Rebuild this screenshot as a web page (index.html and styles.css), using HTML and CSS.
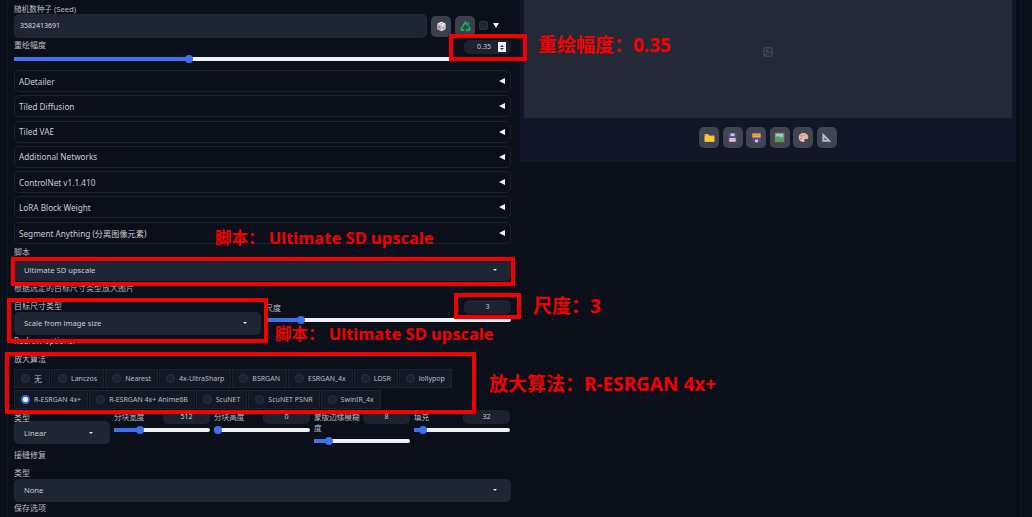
FILE: index.html
```html
<!DOCTYPE html>
<html lang="zh">
<head>
<meta charset="utf-8">
<title>Ultimate SD upscale</title>
<link rel="stylesheet" href="styles.css">
</head>
<body>
<div class="page">
  <main class="left">
    <div class="label seed-label">随机数种子 (Seed)</div>
    <div class="seed-row">
      <div class="field seed-input">3582413691</div>
      <button class="tool"><svg viewBox="0 0 16 16" width="11" height="11"><path d="M8 1l6 3v8l-6 3-6-3V4z" fill="#d8d2d8"/><path d="M8 1l6 3-6 3-6-3z" fill="#f3eef2"/><path d="M8 7v8l-6-3V4z" fill="#b9aeb9"/><circle cx="8" cy="4" r="1" fill="#a35a7a"/><circle cx="5" cy="9" r="1" fill="#a35a7a"/><circle cx="11" cy="10" r="1" fill="#a35a7a"/></svg></button>
      <button class="tool"><svg viewBox="0 0 16 16" width="11" height="11" fill="none" stroke="#17b45c" stroke-width="2.400"><path d="M4.500 6.500L8 1.800l2.300 3.400"/><path d="M12.300 7.500l2.200 4.300-1.200 1.400H10"/><path d="M6.500 13.200H2.700l-1-1.500L3.500 8.500"/><path d="M8.500 5.800h3.800V2M10 10.500v5M3 7l3 1" stroke-width="1.500"/></svg></button>
      <span class="check"></span>
      <span class="tri-down"></span>
    </div>
    <div class="strength">
      <div class="strength-head">
        <span class="label">重绘幅度</span>
        <div class="num wide">0.35<span class="spin"><i></i><i></i></span></div>
      </div>
      <div class="slider"><span class="fill" style="width:175px"></span></div>
    </div>
    <div class="accordions">
      <div class="acc"><span>ADetailer</span><b></b></div>
      <div class="acc"><span>Tiled Diffusion</span><b></b></div>
      <div class="acc"><span>Tiled VAE</span><b></b></div>
      <div class="acc"><span>Additional Networks</span><b></b></div>
      <div class="acc"><span>ControlNet v1.1.410</span><b></b></div>
      <div class="acc"><span>LoRA Block Weight</span><b></b></div>
      <div class="acc"><span>Segment Anything (分离图像元素)</span><b></b></div>
    </div>
    <div class="label script-label">脚本</div>
    <div class="select">Ultimate SD upscale<em></em></div>
    <div class="label note">根据选定的目标尺寸类型放大图片</div>
    <div class="target-row">
      <div class="target">
        <div class="label">目标尺寸类型</div>
        <div class="select">Scale from image size<em></em></div>
      </div>
      <div class="scale">
        <div class="scale-head"><span class="label">尺度</span><div class="num">3</div></div>
        <div class="slider"><span class="fill" style="width:36px"></span></div>
      </div>
    </div>
    <div class="label redraw">Redraw options:</div>
    <div class="label upscaler-label">放大算法</div>
    <div class="radios">
      <label class="radio"><i></i><span class="cjk">无</span></label>
      <label class="radio"><i></i>Lanczos</label>
      <label class="radio"><i></i>Nearest</label>
      <label class="radio"><i></i>4x-UltraSharp</label>
      <label class="radio"><i></i>BSRGAN</label>
      <label class="radio"><i></i>ESRGAN_4x</label>
      <label class="radio"><i></i>LDSR</label>
      <label class="radio"><i></i>lollypop</label>
      <label class="radio on"><i></i>R-ESRGAN 4x+</label>
      <label class="radio"><i></i>R-ESRGAN 4x+ Anime6B</label>
      <label class="radio"><i></i>ScuNET</label>
      <label class="radio"><i></i>ScuNET PSNR</label>
      <label class="radio"><i></i>SwinIR_4x</label>
    </div>
    <div class="params">
      <div class="param type">
        <div class="label">类型</div>
        <div class="select">Linear<em></em></div>
      </div>
      <div class="param">
        <div class="param-head"><span class="label">分块宽度</span><div class="num">512</div></div>
        <div class="slider"><span class="fill" style="width:26px"></span></div>
      </div>
      <div class="param">
        <div class="param-head"><span class="label">分块高度</span><div class="num">0</div></div>
        <div class="slider"><span class="fill" style="width:4px"></span></div>
      </div>
      <div class="param tall">
        <div class="param-head"><span class="label">蒙版边缘模糊度</span><div class="num">8</div></div>
        <div class="slider"><span class="fill" style="width:15px"></span></div>
      </div>
      <div class="param">
        <div class="param-head"><span class="label">填充</span><div class="num">32</div></div>
        <div class="slider"><span class="fill" style="width:9px"></span></div>
      </div>
    </div>
    <div class="label seam">接缝修复</div>
    <div class="label seam-type">类型</div>
    <div class="select">None<em></em></div>
    <div class="label save">保存选项</div>
  </main>
  <aside class="right">
    <div class="preview">
      <svg viewBox="0 0 12 12" width="10" height="10" fill="none" stroke="#565d6b" stroke-width="1"><rect x="1" y="1" width="10" height="10" rx="1.500"/><circle cx="4.500" cy="4.500" r="1"/><path d="M1.500 10.500L8 5.500l3 3"/></svg>
    </div>
    <div class="actions">
      <button class="act"><svg viewBox="0 0 16 16" width="11" height="11"><path d="M1 3h5l2 2h7v9H1z" fill="#f7b92f"/><path d="M1 6h14v8H1z" fill="#fcc63c"/></svg></button>
      <button class="act"><svg viewBox="0 0 16 16" width="11" height="11"><path d="M2 2h12v12H2z" fill="#5b4a92"/><path d="M5 2h6v4H5z" fill="#c9c5dc"/><path d="M3.500 9h9v5h-9z" fill="#f5e6ea"/><path d="M3.500 11h9v1h-9z" fill="#e0637f"/></svg></button>
      <button class="act"><svg viewBox="0 0 16 16" width="11" height="11"><path d="M2 5h12v10H2z" fill="#5b4a92"/><path d="M2 2h12v6H2z" fill="#f2b33a"/><path d="M4 4h8v1H4z" fill="#ea5a4e"/><path d="M6 11h4v4H6z" fill="#d8d3e8"/></svg></button>
      <button class="act"><svg viewBox="0 0 16 16" width="11" height="11"><path d="M1 1h14v14H1z" fill="#a3743a"/><path d="M2.500 2.500h11v6h-11z" fill="#8fd0ea"/><path d="M2.500 8l3-3 3 3 2-1.500 3 2v5h-11z" fill="#4aa564"/></svg></button>
      <button class="act"><svg viewBox="0 0 16 16" width="11" height="11"><path d="M8 1.500c4 0 7 2.800 7 6 0 2.500-2.500 3-4 2.500-1.500-.5-2 1-1.500 2.200.5 1.300-.5 2.300-2 2.300-3.800 0-6.500-3-6.500-6.500S4 1.500 8 1.500z" fill="#eeb9a8"/><circle cx="5" cy="5.500" r="1.300" fill="#e0507a"/><circle cx="9" cy="4.500" r="1.300" fill="#59b96c"/><circle cx="4.500" cy="9.500" r="1.300" fill="#5b8fe0"/><circle cx="12" cy="7" r="1.200" fill="#e0b83f"/></svg></button>
      <button class="act"><svg viewBox="0 0 16 16" width="11" height="11"><path fill-rule="evenodd" d="M2 1l13 13H2zM5 8v3.500h3.500z" fill="#b9bcc4"/></svg></button>
    </div>
  </aside>
</div>

<div class="box box-strength"></div>
<div class="box box-script"></div>
<div class="box box-target"></div>
<div class="box box-scale"></div>
<div class="box box-upscaler"></div>

<div class="note-red n-strength">重绘幅度：0.35</div>
<div class="note-red n-script">脚本： Ultimate SD upscale</div>
<div class="note-red n-target">脚本： Ultimate SD upscale</div>
<div class="note-red n-scale">尺度：3</div>
<div class="note-red n-upscaler">放大算法：R-ESRGAN 4x+</div>
</body>
</html>
```
FILE: styles.css
```css
* { box-sizing: border-box; }
html, body { margin: 0; height: 517px; overflow: hidden; background: #0b0f19; }
body { position: relative; font-family: "Noto Sans", "Noto Sans CJK SC", sans-serif; font-size: 8px; color: #c9ced6; }
button { border: 0; padding: 0; }

.page { display: flex; align-items: flex-start; gap: 9px; width: 1015px; height: 517px; margin-left: 7px; padding-left: 6px; border-left: 1px solid #141926; border-right: 1px solid #141926; overflow: hidden; }
.left { width: 497px; flex: none; }
.right { width: 496px; flex: none; height: 162px; background: #121727; border-radius: 0 0 4px 4px; padding: 0 4px; }

.label { font-size: 8px; line-height: 10px; color: #b9bec7; white-space: nowrap; }
.seed-label { padding-top: 4px; height: 14px; font-size: 7.600px; }

.seed-row { display: flex; align-items: center; height: 23.500px; }
.field { background: #1f2633; border-radius: 5px; height: 23.500px; line-height: 23.500px; padding-left: 6px; font-size: 7px; color: #d5d9e0; }
.seed-input { width: 413px; }
.tool { width: 20px; height: 21px; margin-left: 4px; margin-top: 2px; background: #3a404e; border-radius: 5px; display: flex; align-items: center; justify-content: center; }
.check { width: 9px; height: 9px; margin-left: 4px; background: #1f2633; border-radius: 2px; border: 1px solid #2b3240; }
.tri-down { width: 0; height: 0; margin-left: 5px; border-left: 3px solid transparent; border-right: 3px solid transparent; border-top: 5px solid #f2f2f2; }

.strength { height: 32.500px; }
.strength-head { display: flex; justify-content: space-between; align-items: flex-start; height: 18px; padding-top: 2.500px; }
.num { width: 47px; height: 14px; line-height: 14px; text-align: center; background: #1c2230; border-radius: 5px; font-size: 7px; color: #c9ced6; flex: none; }
.num.wide { position: relative; text-align: right; padding-right: 20px; }
.spin { position: absolute; right: 5px; top: 2px; width: 8px; height: 10px; background: #eef0f3; display: flex; flex-direction: column; align-items: center; justify-content: center; gap: 1px; }
.spin i { width: 0; height: 0; border-left: 2px solid transparent; border-right: 2px solid transparent; }
.spin i:first-child { border-bottom: 2.500px solid #333; }
.spin i:last-child { border-top: 2.500px solid #333; }

.slider { position: relative; height: 4px; background: #eef0f3; border-radius: 2px; margin-top: 1px; }
.fill { position: relative; display: block; height: 100%; background: #3f70ee; border-radius: 2px; }
.fill::after { content: ""; position: absolute; right: -4px; top: -2px; width: 8px; height: 8px; border-radius: 50%; background: #3f70ee; }

.accordions { display: flex; flex-direction: column; gap: 3.300px; }
.acc { display: flex; justify-content: space-between; align-items: center; height: 22px; padding: 0 5px 0 4px; border: 1px solid #1c2230; border-radius: 5px; font-size: 8.200px; color: #c9ced6; }
.acc b { width: 0; height: 0; border-top: 3px solid transparent; border-bottom: 3px solid transparent; border-right: 6px solid #f2f2f2; }

.select { display: flex; justify-content: space-between; align-items: center; height: 23px; padding: 0 14px 0 10px; background: #1f2633; border-radius: 5px; font-size: 7.600px; color: #c9ced6; }
.select em { width: 0; height: 0; border-left: 2.500px solid transparent; border-right: 2.500px solid transparent; border-top: 2.500px solid #e6e6e6; }

.script-label { margin-top: 2.700px; height: 12px; line-height: 12px; }
.note { margin-top: 1px; height: 12px; line-height: 12px; color: #a7acb5; }

.target-row { display: flex; gap: 4px; margin-top: 6.500px; }
.target { width: 247px; flex: none; }
.target .label { height: 11px; }
.scale { flex: 1; }
.scale-head { display: flex; justify-content: space-between; height: 17px; }
.scale-head .label { line-height: 13px; }
.scale-head .num { margin-top: -1px; }
.scale .slider { margin-top: 0; }

.redraw { margin-top: 1.500px; height: 10px; }
.upscaler-label { margin-top: 7px; height: 11px; line-height: 11px; }

.radios { display: flex; flex-wrap: wrap; gap: 1.500px 1px; margin-top: 4.500px; width: 445px; }
.radio { display: flex; align-items: center; gap: 4px; height: 19.500px; padding: 0 6px; background: #131825; border: 1px solid #1c2230; font-size: 7px; color: #b9bec7; white-space: nowrap; }
.radio i { width: 9px; height: 9px; border-radius: 50%; background: #1c2230; border: 1px solid #2b3240; flex: none; }
.radio.on i { background: #fff; border: 2.500px solid #3f70ee; }
.radio .cjk { font-size: 8px; padding-right: 1px; }

.params { display: flex; gap: 4px; margin-top: 1px; height: 39px; }
.param { width: 96px; flex: none; }
.param .label { line-height: 11px; }
.param.type .label { height: 11px; padding-top: 2px; }
.param.type .select { padding: 0 17px 0 10px; }
.param-head { display: flex; justify-content: space-between; height: 17px; }
.param-head .label { padding-top: 2px; width: 48px; white-space: normal; font-size: 7.600px; }
.param.tall .slider { margin-top: 12px; }

.seam { height: 12px; line-height: 12px; }
.seam-type { margin-top: 5.500px; height: 12px; line-height: 12px; }
.save { height: 12px; line-height: 12px; }

.preview { height: 118px; background: #232937; display: flex; align-items: center; justify-content: center; padding-bottom: 14px; }
.actions { display: flex; justify-content: center; gap: 3.500px; padding-top: 9px; }
.act { width: 20px; height: 21px; border-radius: 5px; background: #3f4553; display: flex; align-items: center; justify-content: center; }

.box { position: absolute; border: 4px solid #f50000; pointer-events: none; }
.box-strength { left: 449px; top: 34px; width: 78px; height: 27px; }
.box-script { left: 11px; top: 257px; width: 504px; height: 29px; }
.box-target { left: 7px; top: 298px; width: 261px; height: 45px; }
.box-scale { left: 454px; top: 293px; width: 67px; height: 26px; }
.box-upscaler { left: 5px; top: 352px; width: 471px; height: 62px; }

.note-red { position: absolute; color: #f50000; font-weight: 700; line-height: 1.200; white-space: nowrap; font-size: 16.500px; font-family: "Noto Sans", "Noto Sans CJK SC", sans-serif; }
.n-strength { left: 538px; top: 34px; font-size: 19px; }
.n-script { left: 215px; top: 228px; }
.n-target { left: 275px; top: 324px; }
.n-scale { left: 533px; top: 295px; font-size: 19px; }
.n-upscaler { left: 489px; top: 373px; font-size: 19px; }
```
